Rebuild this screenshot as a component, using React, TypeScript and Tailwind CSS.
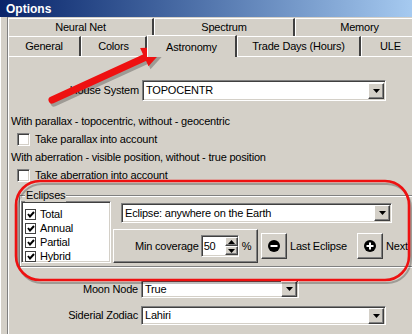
import React from 'react'

const sunken =
  'border border-t-[#808080] border-l-[#808080] border-b-white border-r-white shadow-[inset_1px_1px_0_#404040,inset_-1px_-1px_0_#d4d0c8]'
const raised =
  'border border-t-white border-l-white border-b-[#404040] border-r-[#404040] shadow-[inset_-1px_-1px_0_#808080]'

function DropButton() {
  return (
    <span className={`w-[16px] h-[16px] shrink-0 flex items-center justify-center bg-[#d4d0c8] ${raised}`}>
      <svg width="7" height="4" viewBox="0 0 7 4">
        <polygon points="0,0 7,0 3.5,4" fill="#000" />
      </svg>
    </span>
  )
}

function Select({ value, className }: { value: string; className: string }) {
  return (
    <div className={`flex items-center justify-between bg-white pr-[1px] ${sunken} ${className}`}>
      <span className="pl-[3px] leading-none">{value}</span>
      <DropButton />
    </div>
  )
}

function Check({ checked, small }: { checked?: boolean; small?: boolean }) {
  return (
    <span
      className={`${small ? 'w-[11px] h-[11px] border border-[#404040]' : `w-[13px] h-[13px] ${sunken}`} bg-white shrink-0 flex items-center justify-center`}
    >
      {checked && (
        <svg width="8" height="7" viewBox="0 0 8 7">
          <polyline points="1,3 3,5.5 7,1" fill="none" stroke="#000" strokeWidth="2" />
        </svg>
      )}
    </span>
  )
}

function RoundButton({ plus }: { plus?: boolean }) {
  return (
    <div className={`w-[26px] h-[26px] bg-[#d4d0c8] flex items-center justify-center shrink-0 ${raised}`}>
      <svg width="12" height="12" viewBox="0 0 12 12">
        <circle cx="6" cy="6" r="6" fill="#000" />
        <rect x="2.5" y="5" width="7" height="2" fill="#fff" />
        {plus && <rect x="5" y="2.5" width="2" height="7" fill="#fff" />}
      </svg>
    </div>
  )
}

function Tab({ label, className }: { label: string; className: string }) {
  return (
    <div
      className={`flex items-center justify-center border-t border-l border-t-white border-l-white border-r-2 border-r-[#404040] ${className}`}
    >
      {label}
    </div>
  )
}

export default function App() {
  return (
    <div
      className="relative w-[412px] h-[334px] overflow-hidden bg-[#d4d0c8] text-black text-[11px] tracking-[-0.2px]"
      style={{ fontFamily: '"Liberation Sans", Arial, sans-serif' }}
    >
      <div className="h-[17px] bg-gradient-to-r from-[#0a246a] to-[#a6caf0] flex items-center pl-[6px]">
        <span className="text-white font-bold text-[12px] tracking-normal">Options</span>
      </div>

      <div className="flex border-l border-white h-[317px]">
        <div className="w-[7px] shrink-0 border-r border-[#808080]" />
        <div className="flex flex-col">
          <div className="flex h-[18px] mt-[1px]">
            <Tab label="Neural Net" className="w-[146px]" />
            <Tab label="Spectrum" className="w-[141px]" />
            <Tab label="Memory" className="w-[130px]" />
          </div>
          <div className="flex h-[20px] items-end">
            <Tab label="General" className="w-[73px] h-[20px]" />
            <Tab label="Colors" className="w-[66px] h-[20px]" />
            <div className="w-[90px] h-[22px] relative top-[1px] z-10 flex items-start pt-[3px] justify-center bg-[#d4d0c8] border-t border-l border-white border-r-2 border-r-[#404040]">
              Astronomy
            </div>
            <Tab label="Trade Days (Hours)" className="w-[124px] h-[20px]" />
            <Tab label="ULE" className="w-[60px] h-[20px]" />
          </div>

          <div className="w-[420px] flex-1 border-t border-l border-white flex flex-col">
            <div className="flex items-center mt-[23px]">
              <span className="w-[130px] text-right">House System</span>
              <Select value="TOPOCENTR" className="ml-[3px] w-[244px] h-[21px]" />
            </div>

            <div className="mt-[13px] pl-[2px] h-[14px] leading-[14px]">
              With parallax - topocentric, without - geocentric
            </div>
            <div className="mt-[3px] pl-[8px] h-[16px] flex items-center gap-[5px]">
              <Check />
              <span>Take parallax into account</span>
            </div>
            <div className="mt-[3px] pl-[2px] h-[14px] leading-[14px]">
              With aberration - visible position, without - true position
            </div>
            <div className="mt-[3px] pl-[8px] h-[16px] flex items-center gap-[5px]">
              <Check />
              <span>Take aberration into account</span>
            </div>

            <div className="relative mt-[12px] ml-[10px] w-[402px] h-[72px] border border-[#808080] shadow-[inset_1px_1px_0_#fff,1px_1px_0_#fff] flex">
              <span className="absolute -top-[8px] left-[5px] px-[1px] bg-[#d4d0c8] leading-[14px]">Eclipses</span>
              <div className={`mt-[5px] ml-[1px] w-[90px] h-[62px] bg-white flex flex-col pt-[5px] pl-[3px] ${sunken}`}>
                {['Total', 'Annual', 'Partial', 'Hybrid'].map((t) => (
                  <div key={t} className="h-[14px] flex items-center gap-[4px]">
                    <Check checked small />
                    <span>{t}</span>
                  </div>
                ))}
              </div>
              <div className="flex flex-col ml-[2px]">
                <Select value="Eclipse: anywhere on the Earth" className="mt-[7px] ml-[8px] w-[271px] h-[20px]" />
                <div className="flex items-center mt-[6px]">
                  <div className={`w-[145px] h-[34px] flex items-center pl-[21px] ${raised}`}>
                    <span>Min coverage</span>
                    <div className={`ml-[2px] w-[38px] h-[22px] bg-white flex items-center ${sunken}`}>
                      <span className="flex-1 pl-[2px]">50</span>
                      <div className="flex flex-col w-[13px] h-[18px]">
                        <span className={`flex-1 bg-[#d4d0c8] flex items-center justify-center ${raised}`}>
                          <svg width="7" height="4" viewBox="0 0 7 4">
                            <polygon points="0,4 7,4 3.5,0" fill="#000" />
                          </svg>
                        </span>
                        <span className={`flex-1 bg-[#d4d0c8] flex items-center justify-center ${raised}`}>
                          <svg width="7" height="4" viewBox="0 0 7 4">
                            <polygon points="0,0 7,0 3.5,4" fill="#000" />
                          </svg>
                        </span>
                      </div>
                    </div>
                    <span className="ml-[3px]">%</span>
                  </div>
                  <div className="ml-[3px]">
                    <RoundButton />
                  </div>
                  <span className="ml-[3px] w-[67px]">Last Eclipse</span>
                  <RoundButton plus />
                  <span className="ml-[3px]">Next</span>
                </div>
              </div>
            </div>

            <div className="flex items-center mt-[13px]">
              <span className="w-[129px] text-right">Moon Node</span>
              <Select value="True" className="ml-[3px] w-[158px] h-[18px]" />
            </div>
            <div className="flex items-center mt-[8px]">
              <span className="w-[129px] text-right">Siderial Zodiac</span>
              <Select value="Lahiri" className="ml-[3px] w-[245px] h-[19px]" />
            </div>
          </div>
        </div>
      </div>

      <svg className="absolute inset-0 pointer-events-none" width="412" height="334" viewBox="0 0 412 334">
        <g opacity="0.25" transform="translate(2,3)">
          <line x1="52" y1="100" x2="146" y2="57" stroke="#000" strokeWidth="7" strokeLinecap="round" />
          <polygon points="166,47 148.5,66.2 140.1,48" fill="#000" />
          <rect x="16" y="181" width="393" height="99" rx="24" fill="none" stroke="#000" strokeWidth="2" />
        </g>
        <line x1="52" y1="100" x2="146" y2="57" stroke="#ee1111" strokeWidth="7" strokeLinecap="round" />
        <polygon points="166,47 148.5,66.2 140.1,48" fill="#ee1111" />
        <rect x="16" y="181" width="393" height="99" rx="24" fill="none" stroke="#ee1111" strokeWidth="2.6" />
      </svg>
    </div>
  )
}
